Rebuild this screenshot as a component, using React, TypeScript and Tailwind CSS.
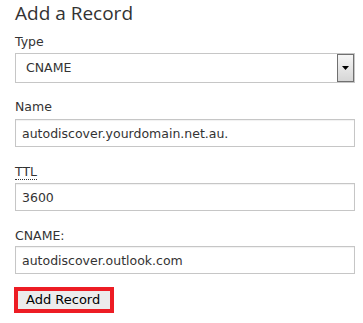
import React from 'react';

const fieldInput =
  'block w-[340px] h-[28px] border border-[#c6c6c6] bg-white px-[6px] text-[12.5px] text-[#333] shadow-[inset_0_1px_1px_rgba(0,0,0,0.06)] outline-none';

const Label: React.FC<{ children: React.ReactNode }> = ({ children }) => (
  <div className="text-[12.5px] leading-[16px] text-[#333]">{children}</div>
);

export default function App() {
  return (
    <div
      className="w-[363px] h-[323px] bg-white pl-[15px] overflow-hidden"
      style={{ fontFamily: '"DejaVu Sans", Verdana, sans-serif' }}
    >
      <h2
        className="text-[19px] leading-[26px] text-[#333] mb-[8px]"
        style={{ fontFamily: '"Open Sans", "Noto Sans", sans-serif' }}
      >
        Add a Record
      </h2>

      <Label>Type</Label>
      <div className="mt-[3px] mb-[16px] flex w-[340px] h-[30px] border border-[#c6c6c6] bg-white">
        <div className="flex-1 flex items-center pl-[10px] text-[12.5px] text-[#333]">CNAME</div>
        <div className="w-[17px] h-full border border-[#707070] bg-gradient-to-b from-[#f6f6f6] to-[#d6d6d6] flex items-center justify-center">
          <svg width="7" height="4" viewBox="0 0 7 4">
            <path d="M0 0h7L3.5 4z" fill="#000" />
          </svg>
        </div>
      </div>

      <Label>Name</Label>
      <div className="mt-[4px] mb-[17px]">
        <input className={fieldInput} defaultValue="autodiscover.yourdomain.net.au." />
      </div>

      <Label>
        <abbr title="Time To Live" className="no-underline border-b border-dotted border-[#333]">
          TTL
        </abbr>
      </Label>
      <div className="mt-[3px] mb-[17px]">
        <input className={fieldInput} defaultValue="3600" />
      </div>

      <Label>CNAME:</Label>
      <div className="mt-[2px] mb-[13px]">
        <input className={fieldInput} defaultValue="autodiscover.outlook.com" />
      </div>

      <button className="ml-[-1px] w-[100px] h-[26px] border-[4px] border-[#ed1c24] bg-[#ececec] text-left pl-[8px] text-[13px] leading-[16px] text-black">
        Add Record
      </button>
    </div>
  );
}
